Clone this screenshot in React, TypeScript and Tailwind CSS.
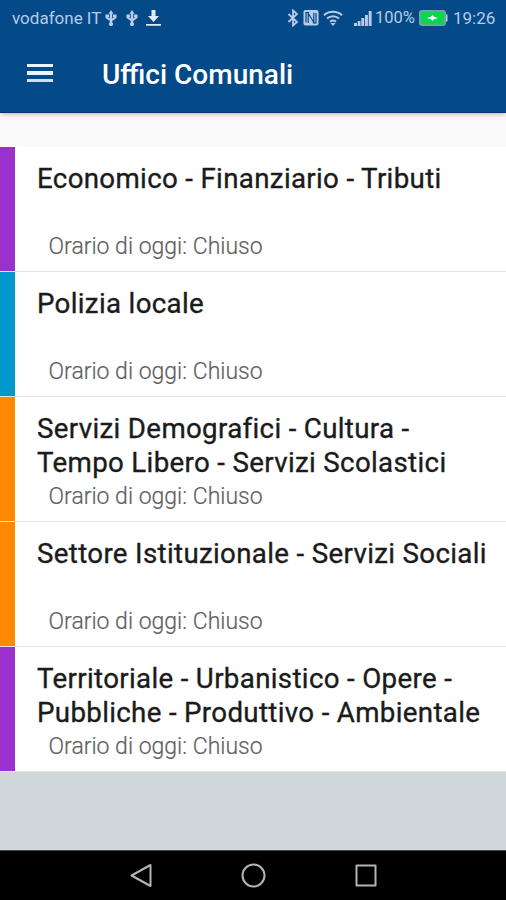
const offices = [
  { lines: ['Economico - Finanziario - Tributi'], bar: 'bg-[#9932cc]' },
  { lines: ['Polizia locale'], bar: 'bg-[#0099cc]' },
  { lines: ['Servizi Demografici - Cultura -', 'Tempo Libero - Servizi Scolastici'], bar: 'bg-[#ff8a00]' },
  { lines: ['Settore Istituzionale - Servizi Sociali'], bar: 'bg-[#ff8a00]' },
  { lines: ['Territoriale - Urbanistico - Opere -', 'Pubbliche - Produttivo - Ambientale'], bar: 'bg-[#9932cc]' },
];

function Usb() {
  return (
    <svg width="12" height="16" viewBox="0 0 12 16" fill="currentColor">
      <path d="M6 0 8.500 3.700H7.200V8.500l1.300-.8V7H8V4.500h3.500V8L7.200 11v1.500a2 2 0 1 1-2.400 0V11L.500 8V4.500H4V7h-.5v.7l1.300.8V3.700H3.500z" />
    </svg>
  );
}

function StatusBar() {
  return (
    <div className="flex h-[36px] items-center pl-[12px] pr-[11px] text-[17px] leading-[20px] text-[#b8cbea]">
      <span className="w-[93px] whitespace-nowrap">vodafone IT</span>
      <div className="flex gap-[9px]">
        <Usb />
        <Usb />
      </div>
      <svg className="ml-[7px] text-[#e2eaf8]" width="17" height="18" viewBox="0 0 17 18" fill="currentColor">
        <path d="M6.500 1h4v6h3.500l-5.500 6L3 7h3.500zM1 15h15v1.800H1z" />
      </svg>
      <div className="ml-auto flex items-center">
        <svg width="12" height="18" viewBox="0 0 12 18" fill="none" stroke="currentColor" strokeWidth="1.8">
          <path d="m1.500 5 8.500 8L6 16.500v-15L10 5l-8.500 8" />
        </svg>
        <svg className="ml-[4px]" width="16" height="18" viewBox="0 0 16 18" fill="none">
          <rect x="0.500" y="1" width="15" height="15.500" rx="2" fill="currentColor" />
          <path d="M5.200 14V4.500l5.600 8.700V3.800M6.200 3.500H3v10M9.800 14H13V4" stroke="#084a86" strokeWidth="1.200" />
        </svg>
        <svg className="ml-[4px]" width="20" height="18" viewBox="0 0 20 18" fill="none" stroke="currentColor" strokeWidth="2">
          <path d="M1 6.200c5-4.600 13-4.600 18 0M4 9.500c3.500-3.100 8.500-3.100 12 0M7 12.700c2-1.600 4-1.600 6 0" />
          <path d="m7.500 14 2.500 3 2.500-3z" fill="currentColor" stroke="none" />
        </svg>
        <svg className="ml-[11px]" width="18" height="17" viewBox="0 0 18 17" fill="currentColor">
          <path d="M0 13h3v3H0zM3.700 11h2.800v5H3.700zM7.300 8h2.900v8H7.300zM11 5h2.900v11H11zM14.700 1h2.900v15h-2.900z" />
        </svg>
        <span className="ml-[3px] w-[41px] whitespace-nowrap text-[16.500px]">100%</span>
        <svg className="ml-[3px]" width="29" height="16" viewBox="0 0 29 16">
          <rect x="0.800" y="0.800" width="25.400" height="14.400" rx="2.500" fill="#0cd64f" stroke="#7e9db8" strokeWidth="1.600" />
          <path d="M27 4.500h1.500v7H27z" fill="#b8cbea" />
          <path d="m8 8 4-1.200L13.500 5l1.500 1.800L19 8l-4 1.200-1.500 1.800L12 9.200z" fill="white" />
        </svg>
        <span className="ml-[5px] w-[42px] whitespace-nowrap">19:26</span>
      </div>
    </div>
  );
}

export default function App() {
  return (
    <div className="flex h-[900px] w-[506px] flex-col overflow-hidden bg-[#cfd7da] font-['Roboto',sans-serif]">
      <header className="relative h-[113px] shrink-0 border-b border-[#063575] bg-[#044a88] shadow-[0_1px_5px_rgba(0,0,0,0.28)]">
        <StatusBar />
        <div className="flex h-[76px] items-center pl-[27px]">
          <div className="mb-[2px] flex w-[75px] flex-col gap-[4px]">
            <span className="h-[3.5px] w-[26px] bg-[#eef4ff]" />
            <span className="h-[3.5px] w-[26px] bg-[#eef4ff]" />
            <span className="h-[3.5px] w-[26px] bg-[#d4def0]" />
          </div>
          <h1 className="pt-[2px] text-[28px] font-medium leading-[34px] text-white">Uffici Comunali</h1>
        </div>
      </header>
      <div className="h-[34px] shrink-0 bg-[#fafafa]" />
      <main>
        {offices.map((office) => (
          <section key={office.lines[0]} className="flex h-[125px] border-b border-[#dfe4e4] bg-white">
            <div className={`w-[15px] shrink-0 ${office.bar}`} />
            <div className="pl-[22px] pt-[15px]">
              <h2 className="h-[67px] whitespace-nowrap text-[27.7px] font-normal leading-[33.5px] tracking-[0.33px] text-[#1b1b1b] [-webkit-text-stroke:0.35px_#1b1b1b]">
                {office.lines.map((line) => (
                  <span key={line} className="block w-fit">{line}</span>
                ))}
              </h2>
              <p className="w-fit pl-[11.5px] pt-[1.5px] text-[23px] font-light leading-[32px] text-[#606060] [-webkit-text-stroke:0.2px_#606060]">Orario di oggi: Chiuso</p>
            </div>
          </section>
        ))}
      </main>
      <footer className="mt-auto flex h-[50px] shrink-0 items-center justify-center border-t border-[#3e4849] bg-black">
        <svg width="250" height="28" viewBox="0 0 250 28" fill="none" stroke="#b5b3b3" strokeWidth="2" strokeLinejoin="round">
          <path d="M3.500 13.500 22.500 3v21z" />
          <circle cx="125.500" cy="13.500" r="11" />
          <path d="M228.500 3.500h19v20h-19z" />
        </svg>
      </footer>
    </div>
  );
}
